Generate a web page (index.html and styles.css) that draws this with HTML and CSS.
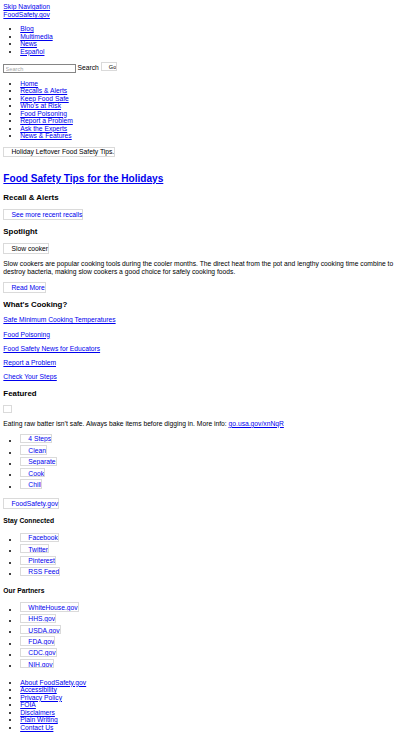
FILE: index.html
```html
<!DOCTYPE html>
<html lang="en">
<head>
<meta charset="utf-8">
<title>FoodSafety.gov</title>
<link rel="stylesheet" href="styles.css">
</head>
<body>
<div class="line"><a href="#main">Skip Navigation</a></div>
<div class="line"><a href="#">FoodSafety.gov</a></div>
<ul class="list">
  <li><a href="#">Blog</a></li>
  <li><a href="#">Multimedia</a></li>
  <li><a href="#">News</a></li>
  <li><a href="#">Español</a></li>
</ul>
<form class="search" action="#">
  <input class="search-input" type="text" placeholder="Search"> Search <span class="alt alt-go" role="button">Go</span>
</form>
<ul class="list">
  <li><a href="#">Home</a></li>
  <li><a href="#">Recalls &amp; Alerts</a></li>
  <li><a href="#">Keep Food Safe</a></li>
  <li><a href="#">Who's at Risk</a></li>
  <li><a href="#">Food Poisoning</a></li>
  <li><a href="#">Report a Problem</a></li>
  <li><a href="#">Ask the Experts</a></li>
  <li><a href="#">News &amp; Features</a></li>
</ul>
<main id="main">
  <div class="alt alt-block hero">Holiday Leftover Food Safety Tips.</div>
  <h1 class="title"><a href="#">Food Safety Tips for the Holidays</a></h1>

  <h3 class="sec">Recall &amp; Alerts</h3>
  <a class="alt alt-block" href="#">See more recent recalls</a>

  <h3 class="sec">Spotlight</h3>
  <div class="alt alt-block">Slow cooker</div>
  <p class="para">Slow cookers are popular cooking tools during the cooler months. The direct heat from the pot and lengthy cooking time combine to destroy bacteria, making slow cookers a good choice for safely cooking foods.</p>
  <a class="alt alt-block" href="#">Read More</a>

  <h3 class="sec">What's Cooking?</h3>
  <p class="para"><a href="#">Safe Minimum Cooking Temperatures</a></p>
  <p class="para"><a href="#">Food Poisoning</a></p>
  <p class="para"><a href="#">Food Safety News for Educators</a></p>
  <p class="para"><a href="#">Report a Problem</a></p>
  <p class="para"><a href="#">Check Your Steps</a></p>

  <h3 class="sec">Featured</h3>
  <div class="alt alt-empty"></div>
  <p class="para">Eating raw batter isn’t safe. Always bake items before digging in. More info: <a href="#">go.usa.gov/xnNqR</a></p>
  <ul class="list list-box">
    <li><a class="alt alt-inline" href="#">4 Steps</a></li>
    <li><a class="alt alt-inline" href="#">Clean</a></li>
    <li><a class="alt alt-inline" href="#">Separate</a></li>
    <li><a class="alt alt-inline" href="#">Cook</a></li>
    <li><a class="alt alt-inline" href="#">Chill</a></li>
  </ul>
</main>
<footer class="foot">
  <a class="alt alt-block foot-logo" href="#">FoodSafety.gov</a>
  <h4 class="sub">Stay Connected</h4>
  <ul class="list list-box list-tight">
    <li><a class="alt alt-inline" href="#">Facebook</a></li>
    <li><a class="alt alt-inline" href="#">Twitter</a></li>
    <li><a class="alt alt-inline" href="#">Pinterest</a></li>
    <li><a class="alt alt-inline" href="#">RSS Feed</a></li>
  </ul>
  <h4 class="sub">Our Partners</h4>
  <ul class="list list-box list-tight">
    <li><a class="alt alt-inline" href="#">WhiteHouse.gov</a></li>
    <li><a class="alt alt-inline" href="#">HHS.gov</a></li>
    <li><a class="alt alt-inline" href="#">USDA.gov</a></li>
    <li><a class="alt alt-inline" href="#">FDA.gov</a></li>
    <li><a class="alt alt-inline" href="#">CDC.gov</a></li>
    <li><a class="alt alt-inline" href="#">NIH.gov</a></li>
  </ul>
  <ul class="list list-foot">
    <li><a href="#">About FoodSafety.gov</a></li>
    <li><a href="#">Accessibility</a></li>
    <li><a href="#">Privacy Policy</a></li>
    <li><a href="#">FOIA</a></li>
    <li><a href="#">Disclaimers</a></li>
    <li><a href="#">Plain Writing</a></li>
    <li><a href="#">Contact Us</a></li>
  </ul>
</footer>
</body>
</html>
```

FILE: styles.css
```css
/* The page is laid out at a 980px-wide desktop size and shown scaled to the 412px window. */
html {
  zoom: 0.4204;
}

body {
  margin: 8px;
  font-family: "Liberation Sans", Arial, sans-serif;
  font-size: 16px;
  line-height: 18px;
  color: #000;
  background: #fff;
}

a {
  color: #0000ee;
}

.line {
  margin: 0;
}

.list {
  margin: 16px 0;
  padding-left: 40px;
}

.list-box li {
  height: 27px;
}

.list-tight {
  margin-top: 19.5px;
}

.list-foot {
  margin-top: 19.5px;
}

.search {
  margin: 0;
}

.search-input {
  box-sizing: border-box;
  width: 172px;
  height: 20px;
  margin: 0;
  padding: 1px 3px;
  border: 2px solid #858585;
  font-family: "Liberation Sans", Arial, sans-serif;
  font-size: 13.33px;
  line-height: 14px;
  color: #000;
  background: #fff;
}

.search-input::placeholder {
  color: #a8a8a8;
}

/* Boxes standing in for pictures that did not load: a faint frame, an empty
   gap where the missing-picture mark would sit, then the alternative text. */
.alt {
  box-sizing: border-box;
  border: 1px solid #dadada;
  padding: 1px 0 1px 17px;
  line-height: 18px;
  text-decoration: none;
}

.alt-block {
  display: block;
  width: fit-content;
  margin: 15.5px 0 0;
}

.alt-inline {
  display: inline-block;
  overflow: hidden;
  vertical-align: baseline;
  height: 22px;
}

.alt-go {
  display: inline-block;
  overflow: hidden;
  vertical-align: baseline;
  height: 20px;
  font-size: 13.33px;
  line-height: 16px;
  padding: 1px 0 1px 17px;
  color: #000;
}

.alt-empty {
  display: block;
  width: 20px;
  height: 20px;
  padding: 0;
  margin: 15.5px 0 0;
}

.hero {
  color: #000;
  margin-top: 16px;
}

.foot-logo {
  margin-top: 18px;
}

.title {
  margin: 38.5px 0 20px;
  font-size: 24px;
  line-height: 28px;
  font-weight: bold;
}

.sec {
  margin: 18.72px 0 15.5px;
  font-size: 18.72px;
  line-height: 22px;
  font-weight: bold;
}

.sub {
  margin: 20px 0 16px;
  font-size: 16px;
  line-height: 18px;
  font-weight: bold;
}

.para {
  margin: 16px 0;
}

.foot {
  margin: 0;
}
```
